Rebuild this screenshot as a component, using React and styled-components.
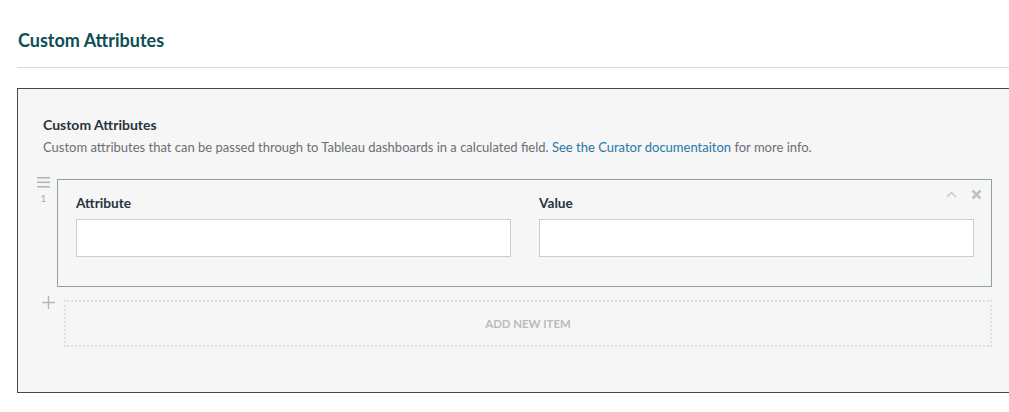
import React from "react";
import styled, { createGlobalStyle } from "styled-components";

const GlobalStyle = createGlobalStyle`
  html, body {
    margin: 0;
    padding: 0;
    background: #ffffff;
    overflow: hidden;
  }
  body {
    font-family: Lato, "Open Sans", "Liberation Sans", sans-serif;
    color: #2d3a45;
  }
`;

const Page = styled.div`
  width: 1001px;
  padding: 29px 0 0 17px;
`;

const PageTitle = styled.h1`
  margin: 0 0 0 1px;
  font-size: 18px;
  font-weight: 700;
  line-height: 22px;
  color: #0d4e55;
`;

const Divider = styled.hr`
  margin: 16px 0 20px;
  border: 0;
  border-top: 1px solid #d7dadc;
`;

const Panel = styled.section`
  background: #f6f6f6;
  border: 1px solid #3b4b53;
  padding: 27px 25px 45px 25px;
`;

const PanelTitle = styled.h2`
  margin: 0;
  font-size: 14px;
  font-weight: 700;
  line-height: 18px;
  color: #283440;
`;

const Description = styled.p`
  margin: 5px 0 0;
  font-size: 13px;
  line-height: 16px;
  color: #6b6f73;

  a {
    color: #2776a6;
    text-decoration: none;
  }
`;

const List = styled.div`
  margin: 24px 0 0 -25px;
  display: flex;
  flex-direction: column;
  gap: 13px;
`;

const Row = styled.div`
  display: flex;
  align-items: flex-start;
`;

const Gutter = styled.div`
  width: 39px;
  flex: none;
  box-sizing: border-box;
  padding-left: ${(p) => p.$left}px;
  margin-top: ${(p) => p.$top}px;
`;

const HandleStack = styled.div`
  width: 13px;
  display: flex;
  flex-direction: column;
  align-items: center;
`;

const Index = styled.span`
  font-size: 10px;
  line-height: 12px;
  margin-top: 4px;
  color: #a9adb0;
`;

const Item = styled.div`
  position: relative;
  flex: 1;
  border: 1px solid #8ba1a9;
  padding: 15px 17px 29px 18px;
  display: grid;
  grid-template-columns: 1fr 1fr;
  column-gap: 28px;
`;

const Field = styled.label`
  display: flex;
  flex-direction: column;
`;

const Label = styled.span`
  font-size: 13.7px;
  font-weight: 700;
  line-height: 16px;
  color: #283440;
  margin-bottom: 8px;
`;

const Input = styled.input`
  box-sizing: border-box;
  height: 38px;
  width: 100%;
  background: #ffffff;
  border: 1px solid #c9cdcf;
  border-radius: 0;
  outline: none;
`;

const Controls = styled.div`
  position: absolute;
  top: 9px;
  right: 9px;
  display: flex;
  gap: 14px;
  align-items: center;
`;

const AddBox = styled.button`
  flex: 1;
  margin-left: 7px;
  height: 47px;
  background: transparent;
  border: 2px dotted #dddfe0;
  font-family: inherit;
  font-size: 11.4px;
  font-weight: 700;
  color: #b9bcbe;
  text-transform: uppercase;
  cursor: pointer;
`;

const Handle = () => (
  <svg width="13" height="11" viewBox="0 0 13 11">
    <rect x="0" y="0" width="13" height="1.6" fill="#b3b6b8" />
    <rect x="0" y="4.5" width="13" height="1.6" fill="#b3b6b8" />
    <rect x="0" y="9" width="13" height="1.6" fill="#b3b6b8" />
  </svg>
);

const Plus = () => (
  <svg width="13" height="13" viewBox="0 0 13 13" style={{ display: "block" }}>
    <rect x="5.8" y="0" width="1.4" height="13" fill="#b3b6b8" />
    <rect x="0" y="5.8" width="13" height="1.4" fill="#b3b6b8" />
  </svg>
);

const ChevronUp = () => (
  <svg width="11" height="7" viewBox="0 0 11 7">
    <path d="M1 6 L5.5 1.5 L10 6" fill="none" stroke="#c4c7c9" strokeWidth="1.4" />
  </svg>
);

const Close = () => (
  <svg width="11" height="11" viewBox="0 0 11 11">
    <path d="M1.5 1.5 L9.5 9.5 M9.5 1.5 L1.5 9.5" stroke="#bfc2c4" strokeWidth="2.6" />
  </svg>
);

export default function App() {
  return (
    <>
      <GlobalStyle />
      <Page>
        <PageTitle>Custom Attributes</PageTitle>
        <Divider />
        <Panel>
          <PanelTitle>Custom Attributes</PanelTitle>
          <Description>
            Custom attributes that can be passed through to Tableau dashboards in a
            calculated field. <a href="#docs">See the Curator documentaiton</a> for more
            info.
          </Description>
          <List>
            <Row>
              <Gutter $left={19} $top={-2}>
                <HandleStack>
                  <Handle />
                  <Index>1</Index>
                </HandleStack>
              </Gutter>
              <Item>
                <Controls>
                  <ChevronUp />
                  <Close />
                </Controls>
                <Field>
                  <Label>Attribute</Label>
                  <Input />
                </Field>
                <Field>
                  <Label>Value</Label>
                  <Input />
                </Field>
              </Item>
            </Row>
            <Row>
              <Gutter $left={24} $top={-4}>
                <Plus />
              </Gutter>
              <AddBox>Add new item</AddBox>
            </Row>
          </List>
        </Panel>
      </Page>
    </>
  );
}
